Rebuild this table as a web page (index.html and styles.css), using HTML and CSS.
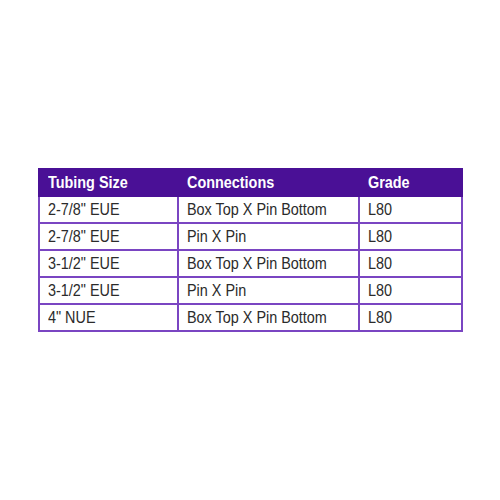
FILE: index.html
```html
<!DOCTYPE html>
<html>
<head>
<meta charset="utf-8">
<link rel="stylesheet" href="styles.css">
</head>
<body>
<div class="page">
  <table class="spec">
    <colgroup>
      <col class="c1"><col class="c2"><col class="c3">
    </colgroup>
    <thead>
      <tr><th><span>Tubing Size</span></th><th><span>Connections</span></th><th><span>Grade</span></th></tr>
    </thead>
    <tbody>
      <tr><td><span>2-7/8" EUE</span></td><td><span>Box Top X Pin Bottom</span></td><td><span>L80</span></td></tr>
      <tr><td><span>2-7/8" EUE</span></td><td><span>Pin X Pin</span></td><td><span>L80</span></td></tr>
      <tr><td><span>3-1/2" EUE</span></td><td><span>Box Top X Pin Bottom</span></td><td><span>L80</span></td></tr>
      <tr><td><span>3-1/2" EUE</span></td><td><span>Pin X Pin</span></td><td><span>L80</span></td></tr>
      <tr><td><span>4" NUE</span></td><td><span>Box Top X Pin Bottom</span></td><td><span>L80</span></td></tr>
    </tbody>
  </table>
</div>
</body>
</html>
```
FILE: styles.css
```css
html, body {
  margin: 0;
  padding: 0;
  background: #ffffff;
}
.page {
  width: 500px;
  height: 500px;
  padding-top: 168px;
  padding-left: 38px;
  box-sizing: border-box;
}
.spec {
  border-collapse: collapse;
  width: 423px;
  table-layout: fixed;
  font-family: "Liberation Sans", Arial, sans-serif;
  font-size: 16px;
}
.c1 { width: 139px; }
.c2 { width: 181px; }
.c3 { width: 103px; }
.spec th, .spec td {
  height: 27px;
  box-sizing: border-box;
  padding: 0 0 0 8px;
  text-align: left;
  vertical-align: middle;
  border: 2px solid #7a45c2;
  white-space: nowrap;
  overflow: hidden;
}
.spec span {
  display: inline-block;
  transform: scaleX(0.9);
  transform-origin: left center;
}
.spec th {
  background: #4a1096;
  color: #ffffff;
  font-weight: bold;
  border-color: #4a1096;
  border-left-color: #c8b6e6;
}
.spec th:first-child { border-left-color: #4a1096; }
.spec td {
  color: #2b2b2b;
}
```
